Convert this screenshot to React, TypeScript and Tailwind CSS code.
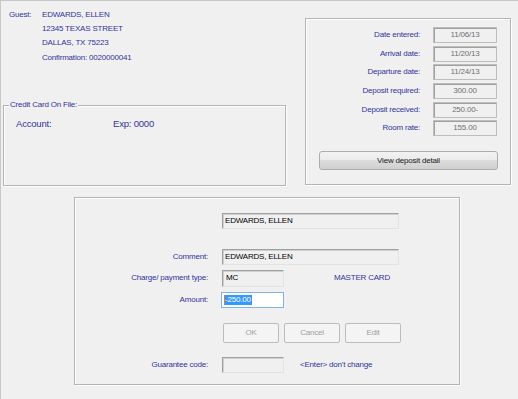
import React from 'react';

const groupBox =
  'border border-[#b4b4b4] shadow-[inset_1px_1px_0_#ffffff,1px_1px_0_#ffffff]';
const sunken =
  'border border-t-[#a0a0a0] border-l-[#a0a0a0] border-r-[#e3e3e3] border-b-[#e3e3e3] shadow-[inset_1px_1px_0_#cfcfcf] bg-[#f0f0f0]';
const label = 'text-[#33339c]';

const stayDates: [string, string][] = [
  ['Date entered:', '11/06/13'],
  ['Arrival date:', '11/20/13'],
  ['Departure date:', '11/24/13'],
  ['Deposit required:', '300.00'],
  ['Deposit received:', '250.00-'],
  ['Room rate:', '155.00'],
];

function FormRow({ caption, children }: { caption?: string; children: React.ReactNode }) {
  return (
    <div className="flex items-center gap-[14px]">
      <div className={`w-[133px] text-right ${label}`}>{caption}</div>
      {children}
    </div>
  );
}

function DisabledButton({ text }: { text: string }) {
  return (
    <button
      disabled
      className="h-[20px] w-[56px] rounded-[2px] border border-[#bcbcbc] bg-[#f4f4f4] text-[#a0a0a0]"
    >
      {text}
    </button>
  );
}

export default function App() {
  return (
    <div className="h-[399px] w-[518px] overflow-hidden border-l border-t border-[#c8c8c8] bg-[#f0f0f0] font-['Liberation_Sans',Arial,sans-serif] text-[8px] leading-none tracking-[-0.2px]">
      {/* top area */}
      <div className="flex pl-[2px]">
        <div className="w-[283px] pt-[7px]">
          <div className={`flex pl-[6px] leading-[14.2px] ${label}`}>
            <div className="w-[33px]">Guest:</div>
            <div>
              <div>EDWARDS, ELLEN</div>
              <div>12345 TEXAS STREET</div>
              <div>DALLAS, TX 75223</div>
              <div>Confirmation: 0020000041</div>
            </div>
          </div>

          <div className={`relative mt-[40px] h-[81px] ${groupBox}`}>
            <span className={`absolute left-[5px] top-[-5px] bg-[#f0f0f0] px-[1px] ${label}`}>
              Credit Card On File:
            </span>
            <div className={`flex pl-[12px] pt-[13px] text-[9.5px] ${label}`}>
              <div className="w-[97px]">Account:</div>
              <div>Exp: 0000</div>
            </div>
          </div>
        </div>

        <div className={`ml-[19px] mt-[17px] h-[167px] w-[206px] pt-[8px] ${groupBox}`}>
          <div className="flex flex-col gap-[2.67px]">
            {stayDates.map(([name, value]) => (
              <div key={name} className="flex items-center justify-end gap-[13px] pr-[13px]">
                <span className={label}>{name}</span>
                <div className="flex h-[16px] w-[64px] items-center justify-center border border-[#bdbdbd] bg-[#f0f0f0] text-[#707070] shadow-[inset_1px_1px_0_#a0a0a0]">
                  {value}
                </div>
              </div>
            ))}
          </div>
          <button className="ml-[13px] mt-[15px] h-[19px] w-[179px] rounded-[3px] border border-[#acacac] bg-[linear-gradient(#f2f2f2,#ebebeb_50%,#dddddd_50%,#cfcfcf)] text-[#1a1a1a]">
            View deposit detail
          </button>
        </div>
      </div>

      {/* payment panel */}
      <div className={`ml-[73px] mt-[11px] h-[188px] w-[386px] pt-[15px] ${groupBox}`}>
        <FormRow>
          <div className={`flex h-[16px] w-[177px] items-center pl-[2px] text-black ${sunken}`}>
            EDWARDS, ELLEN
          </div>
        </FormRow>
        <div className="mt-[20px]">
          <FormRow caption="Comment:">
            <div className={`flex h-[16px] w-[177px] items-center pl-[2px] text-black ${sunken}`}>
              EDWARDS, ELLEN
            </div>
          </FormRow>
        </div>
        <div className="mt-[5px]">
          <FormRow caption="Charge/ payment type:">
            <div className={`flex h-[17px] w-[62px] items-start pl-[3px] pt-[3px] text-black ${sunken}`}>
              MC
            </div>
            <span className={`ml-[36px] ${label}`}>MASTER CARD</span>
          </FormRow>
        </div>
        <div className="mt-[5px]">
          <FormRow caption="Amount:">
            <div className="-ml-[1px] flex h-[16px] w-[63px] items-center border border-[#7eb4ea] bg-white pl-[2px]">
              <span className="border-l border-[#e07a2a] bg-[#3399ff] py-[1px] pr-[1px] text-white">
                -250.00
              </span>
            </div>
          </FormRow>
        </div>
        <div className="mt-[15px]">
          <FormRow>
            <div className="ml-[1px] flex gap-[5px]">
              <DisabledButton text="OK" />
              <DisabledButton text="Cancel" />
              <DisabledButton text="Edit" />
            </div>
          </FormRow>
        </div>
        <div className="mt-[14px]">
          <FormRow caption="Guarantee code:">
            <div className={`h-[16px] w-[62px] ${sunken}`} />
            <span className={`ml-[2px] ${label}`}>&lt;Enter&gt; don't change</span>
          </FormRow>
        </div>
      </div>
    </div>
  );
}
